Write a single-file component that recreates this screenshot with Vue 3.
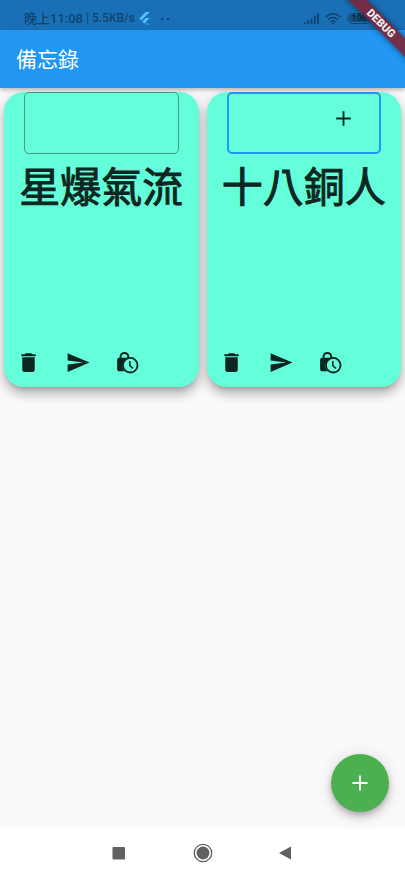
<script setup>
import { ref } from 'vue'

const memos = ref([
  { id: 1, title: '星爆氣流', text: '', active: false },
  { id: 2, title: '十八銅人', text: '', active: true },
])
</script>

<template>
  <div class="screen">
    <div class="status">
      <span class="clock">晚上11:08</span>
      <span class="speed">| 5.5KB/s</span>
      <svg class="flutter" viewBox="0 0 24 24" aria-hidden="true">
        <path d="M14.3 0L2.3 12 6 15.7 21.7 0z" fill="#54c5f8" />
        <path d="M14.3 11.1L7.9 17.5 11.6 21.2 21.7 11.1z" fill="#54c5f8" />
        <path d="M11.6 21.2L14.4 24H21.7L15.2 17.5z" fill="#2f8fd0" />
      </svg>
      <span class="dots"><i></i><i></i></span>
      <svg class="signal" viewBox="0 0 16 12" aria-hidden="true">
        <path d="M0 10h2v2H0zM3.500 8h2v4h-2zM7 6h2v6H7zM10.500 3h2v9h-2zM14 0h2v12h-2z" />
      </svg>
      <svg class="wifi" viewBox="0 0 16 12" aria-hidden="true">
        <g fill="none" stroke="currentColor" stroke-width="1.400">
          <path d="M.6 4Q8-2.400 15.400 4" />
          <path d="M3 6.600Q8 2.200 13 6.600" />
          <path d="M5.300 9Q8 6.800 10.700 9" />
        </g>
        <path d="M6.300 10Q8 8.800 9.700 10L8 12z" />
      </svg>
      <span class="battery"><b>100</b></span>
    </div>

    <header class="appbar"><h1>備忘錄</h1></header>

    <main class="body">
      <article v-for="memo in memos" :key="memo.id" class="card">
        <div class="field" :class="{ active: memo.active }">
          <input v-model="memo.text" type="text" :aria-label="memo.title" />
          <svg v-if="memo.active" class="plus" viewBox="0 0 24 24" aria-hidden="true">
            <path d="M19 12.900h-6.100V19h-1.800v-6.100H5v-1.800h6.100V5h1.800v6.100H19z" />
          </svg>
        </div>
        <h2>{{ memo.title }}</h2>
        <div class="actions">
          <button type="button" aria-label="刪除">
            <svg viewBox="0 0 24 24">
              <path d="M6 19c0 1.100.9 2 2 2h8c1.100 0 2-.9 2-2V7H6v12zM18 4h-2.500l-.7-.7c-.2-.2-.4-.3-.7-.3H9.900c-.3 0-.5.100-.7.300L8.500 4H6c-.6 0-1 .4-1 1s.4 1 1 1h12c.6 0 1-.4 1-1s-.4-1-1-1z" />
            </svg>
          </button>
          <button type="button" aria-label="傳送">
            <svg viewBox="0 0 24 24">
              <path d="M2.500 21L23.500 12 2.500 3v7l15 2-15 2z" />
            </svg>
          </button>
          <button type="button" aria-label="定時">
            <svg viewBox="0 0 24 24">
              <path d="M6.300 9V6.500a3.700 3.700 0 0 1 7.400 0V9" fill="none" stroke="currentColor" stroke-width="1.900" />
              <path d="M5 7.500h10.200A7.800 7.800 0 0 0 10.100 20.500H5c-1.100 0-2-.9-2-2V9.500c0-1.100.9-2 2-2z" />
              <circle class="dial" cx="15.600" cy="14.600" r="7" />
              <path d="M15.200 10.600v4.500l3 2.600" fill="none" stroke="currentColor" stroke-width="1.500" />
            </svg>
          </button>
        </div>
      </article>
    </main>

    <button class="fab" type="button" aria-label="新增備忘">
      <svg viewBox="0 0 24 24"><path d="M19 12.900h-6.100V19h-1.800v-6.100H5v-1.800h6.100V5h1.800v6.100H19z" /></svg>
    </button>

    <nav class="navbar">
      <button type="button" aria-label="最近">
        <svg viewBox="0 0 20 20"><rect x="3.500" y="4" width="12.500" height="12.500" rx="1" /></svg>
      </button>
      <button type="button" aria-label="主畫面">
        <svg viewBox="0 0 20 20">
          <circle cx="10" cy="10" r="8.700" fill="none" stroke="currentColor" stroke-width="1.300" />
          <circle cx="10" cy="10" r="6.400" />
        </svg>
      </button>
      <button type="button" aria-label="返回">
        <svg viewBox="0 0 20 20"><path d="M2 10L14 3.500v13z" /></svg>
      </button>
    </nav>

    <div class="banner">DEBUG</div>
  </div>
</template>

<style>
body {
  margin: 0;
}
</style>

<style scoped>
.screen {
  position: relative;
  display: flex;
  flex-direction: column;
  min-height: 100vh;
  overflow: hidden;
  background: #fafafa;
  font-family: Roboto, "Noto Sans CJK TC", sans-serif;
}

svg {
  display: block;
  fill: currentColor;
}

button {
  display: grid;
  place-items: center;
  padding: 0;
  border: 0;
  background: none;
  color: inherit;
}

.status {
  display: flex;
  align-items: center;
  height: 30px;
  box-sizing: border-box;
  padding: 7px 34px 0 24px;
  background: #1a70b7;
  color: #0f436e;
  font-size: 12px;
  font-weight: 500;
  line-height: 23px;
  white-space: nowrap;
}

.clock {
  font-size: 13px;
}

.speed {
  margin-left: 3px;
}

.flutter {
  width: 13px;
  height: 13px;
  margin-left: 3px;
}

.dots {
  display: flex;
  gap: 4px;
  margin-left: 10px;
}

.dots i {
  width: 2px;
  height: 2px;
  border-radius: 1px;
  background: #0b2f4d;
}

.signal {
  width: 15px;
  height: 11px;
  margin-left: auto;
}

.wifi {
  width: 16px;
  height: 12px;
  margin-left: 6px;
}

.battery {
  width: 24px;
  height: 11px;
  box-sizing: border-box;
  margin-left: 6px;
  padding: 1px;
  border: 1px solid #0f436e;
  border-radius: 6px;
}

.battery b {
  display: block;
  height: 7px;
  border-radius: 4px;
  background: #154f80;
  color: #092c49;
  font-size: 9px;
  line-height: 7px;
  text-align: center;
}

.appbar {
  position: relative;
  display: flex;
  align-items: center;
  height: 58px;
  padding: 0 16px;
  background: #2196f3;
  box-shadow: 0 2px 4px rgba(0, 0, 0, 0.25);
  color: #fff;
}

h1 {
  margin: 2px 0 0;
  font-size: 21px;
  font-weight: 400;
  line-height: 28px;
}

.body {
  display: grid;
  flex: 1;
  grid-template-columns: 1fr 1fr;
  gap: 8px;
  align-content: start;
  padding: 4px;
}

.card {
  display: flex;
  flex-direction: column;
  min-width: 0;
  height: 295px;
  border-radius: 20px;
  background: #64ffda;
  box-shadow: 0 5px 5px -3px rgba(0, 0, 0, 0.2), 0 8px 10px 1px rgba(0, 0, 0, 0.14), 0 3px 14px 2px rgba(0, 0, 0, 0.12);
  color: #0e2621;
}

.field {
  display: flex;
  align-items: center;
  justify-content: flex-end;
  height: 62px;
  box-sizing: border-box;
  margin: 0 20px;
  border: 1px solid #3f9d87;
  border-radius: 5px;
}

.field.active {
  border: 2px solid #2196f3;
}

.field input {
  flex: 1;
  min-width: 0;
  height: 56px;
  box-sizing: border-box;
  padding: 0 12px;
  border: 0;
  outline: 0;
  background: transparent;
  color: inherit;
  font: inherit;
}

.plus {
  width: 25px;
  height: 25px;
  margin: 0 23px 9px 0;
}

h2 {
  margin: 4px 0 0;
  font-size: 41px;
  font-weight: 400;
  line-height: 60px;
  text-align: center;
  white-space: nowrap;
  -webkit-text-stroke: 1px currentColor;
}

.actions {
  display: flex;
  margin-top: auto;
}

.actions button {
  width: 49px;
  height: 49px;
}

.actions svg {
  width: 25px;
  height: 25px;
}

.dial {
  fill: #64ffda;
  stroke: currentColor;
  stroke-width: 1.8;
}

.fab {
  align-self: flex-end;
  width: 58px;
  height: 58px;
  margin: 0 16px 16px;
  border-radius: 50%;
  background: #4caf50;
  box-shadow: 0 3px 5px -1px rgba(0, 0, 0, 0.2), 0 6px 10px rgba(0, 0, 0, 0.14), 0 1px 18px rgba(0, 0, 0, 0.12);
  color: #fff;
}

.fab svg {
  width: 26px;
  height: 26px;
}

.navbar {
  position: relative;
  display: flex;
  align-items: center;
  justify-content: center;
  gap: 34px;
  height: 50px;
  background: #fff;
  color: #616161;
}

.navbar button {
  width: 50px;
  height: 50px;
}

.navbar svg {
  width: 20px;
  height: 20px;
}

.banner {
  position: absolute;
  top: 17px;
  right: -36px;
  width: 120px;
  background: rgba(122, 38, 60, 0.92);
  box-shadow: 0 0 6px rgba(0, 0, 0, 0.5);
  color: #eee;
  font-size: 11px;
  font-weight: 900;
  line-height: 13px;
  text-align: center;
  transform: rotate(45deg);
}
</style>
